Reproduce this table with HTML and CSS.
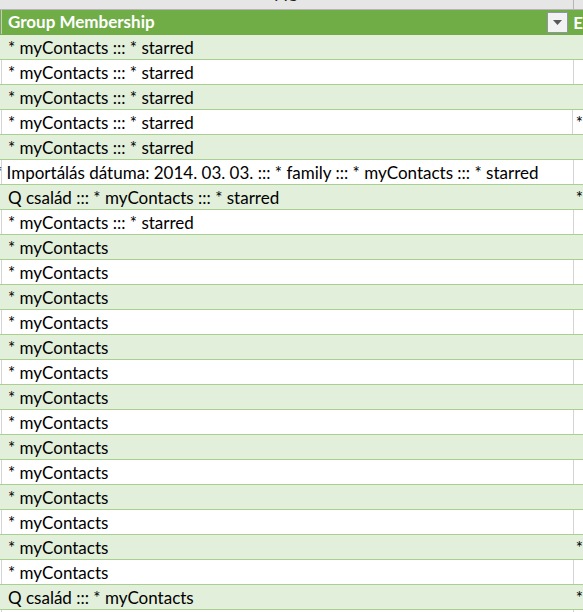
FILE: index.html
```html
<!DOCTYPE html>
<html>
<head>
<meta charset="utf-8">
<link rel="stylesheet" href="styles.css">
</head>
<body>
<div class="sheet">
  <div class="colheads">
    <div class="colhead colhead-a"><span>AC</span></div>
    <div class="colhead colhead-b"></div>
  </div>
  <div class="row head">
    <div class="cell a"><span class="title">Group Membership</span><span class="filter"><svg width="9" height="5" viewBox="0 0 9 5"><path d="M0 0H9L4.5 5Z" fill="#595959"/></svg></span></div>
    <div class="cell b">E</div>
  </div>
  <div class="row band"><div class="cell a">* myContacts ::: * starred</div><div class="cell b"></div></div>
  <div class="row"><div class="cell a">* myContacts ::: * starred</div><div class="cell b"></div></div>
  <div class="row band"><div class="cell a">* myContacts ::: * starred</div><div class="cell b"></div></div>
  <div class="row"><div class="cell a">* myContacts ::: * starred</div><div class="cell b">*</div></div>
  <div class="row band"><div class="cell a">* myContacts ::: * starred</div><div class="cell b"></div></div>
  <div class="row"><div class="cell a"><span class="shift">* Importálás dátuma: 2014. 03. 03. ::: * family ::: * myContacts ::: * starred</span></div><div class="cell b"></div></div>
  <div class="row band"><div class="cell a">Q család ::: * myContacts ::: * starred</div><div class="cell b">*</div></div>
  <div class="row"><div class="cell a">* myContacts ::: * starred</div><div class="cell b"></div></div>
  <div class="row band"><div class="cell a">* myContacts</div><div class="cell b"></div></div>
  <div class="row"><div class="cell a">* myContacts</div><div class="cell b"></div></div>
  <div class="row band"><div class="cell a">* myContacts</div><div class="cell b"></div></div>
  <div class="row"><div class="cell a">* myContacts</div><div class="cell b"></div></div>
  <div class="row band"><div class="cell a">* myContacts</div><div class="cell b"></div></div>
  <div class="row"><div class="cell a">* myContacts</div><div class="cell b"></div></div>
  <div class="row band"><div class="cell a">* myContacts</div><div class="cell b"></div></div>
  <div class="row"><div class="cell a">* myContacts</div><div class="cell b"></div></div>
  <div class="row band"><div class="cell a">* myContacts</div><div class="cell b"></div></div>
  <div class="row"><div class="cell a">* myContacts</div><div class="cell b"></div></div>
  <div class="row band"><div class="cell a">* myContacts</div><div class="cell b"></div></div>
  <div class="row"><div class="cell a">* myContacts</div><div class="cell b"></div></div>
  <div class="row band"><div class="cell a">* myContacts</div><div class="cell b">*</div></div>
  <div class="row"><div class="cell a">* myContacts</div><div class="cell b"></div></div>
  <div class="row band"><div class="cell a">Q család ::: * myContacts</div><div class="cell b">*</div></div>
  <div class="row tail"><div class="cell a"></div><div class="cell b"></div></div>
</div>
</body>
</html>
```
FILE: styles.css
```css
html, body {
  margin: 0;
  padding: 0;
  background: #ffffff;
}
.sheet {
  width: 583px;
  height: 612px;
  overflow: hidden;
  font-family: Lato, "Liberation Sans", sans-serif;
  font-size: 17px;
  color: #000000;
}
.colheads {
  display: flex;
  height: 9px;
  background: #e6e6e6;
  border-bottom: 1px solid #b5b5b5;
}
.colhead {
  overflow: hidden;
  height: 9px;
}
.colhead-a {
  width: 573px;
  border-right: 1px solid #b5b5b5;
  display: flex;
  justify-content: center;
  color: #222;
  font-size: 17px;
}
.colhead-a span {
  display: block;
  line-height: 20px;
  margin-top: -15px;
}
.colhead-b {
  flex: 1;
}
.row {
  display: flex;
  height: 24px;
  border-bottom: 1px solid #a9d08e;
  background: #ffffff;
}
.row.band {
  background: #e2efda;
}
.row.head {
  background: #70ad47;
  color: #ffffff;
  font-weight: bold;
  border-bottom: 1px solid #70ad47;
}
.cell {
  line-height: 24px;
  padding-top: 1px;
  height: 23px;
  white-space: nowrap;
  overflow: visible;
}
.cell.a {
  width: 565px;
  padding-left: 6px;
  border-left: 1px solid #d4d4d4;
  border-right: 1px solid #d4d4d4;
  margin-left: 1px;
  display: flex;
  align-items: center;
}
.row.band .cell.a,
.row.head .cell.a {
  border-color: transparent;
}
.row.head .cell.a {
  border-left-color: #c9c9c9;
  padding-top: 0;
  height: 24px;
}
.cell.b {
  flex: 1;
  padding-left: 3px;
}
.title {
  flex: 1;
}
.filter {
  width: 19px;
  height: 19px;
  border: 1px solid #8e96a0;
  background: #f2f2f2;
  display: flex;
  align-items: center;
  justify-content: center;
  margin-right: 1px;
}
.shift {
  margin-left: -13px;
}
.row.tail {
  border-bottom: none;
}
```
